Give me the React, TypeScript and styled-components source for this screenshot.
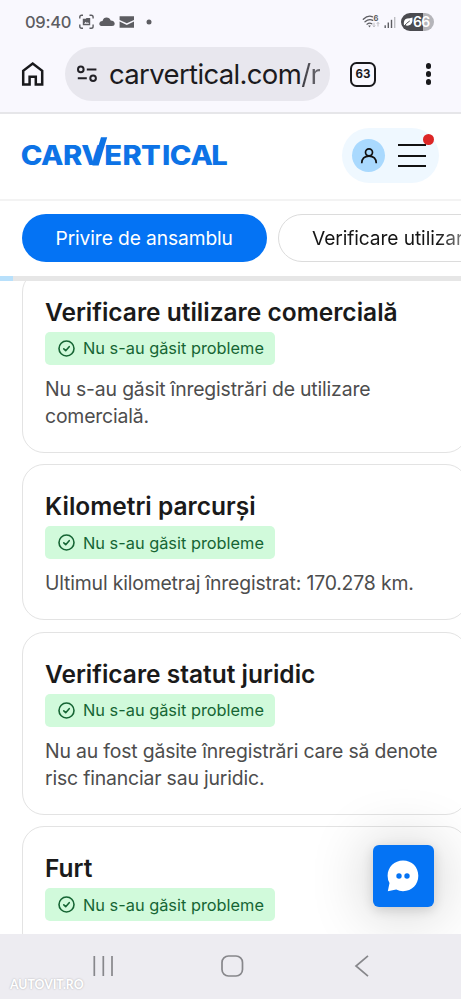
import React from "react";
import styled, { createGlobalStyle } from "styled-components";

const Global = createGlobalStyle`
  * { box-sizing: border-box; }
  html, body { margin: 0; padding: 0; overflow: hidden; }
  body { font-family: Inter, "Liberation Sans", sans-serif; background: #fff; }
  svg { display: block; flex: none; overflow: visible; }
`;

const Screen = styled.div`
  position: relative;
  width: 461px;
  height: 999px;
  overflow: hidden;
  display: flex;
  flex-direction: column;
  background: #fff;
`;

const BrowserChrome = styled.div`
  flex: none;
  height: 114px;
  background: #f9f8fe;
  border-bottom: 2px solid #e6e6e9;
`;

const StatusBar = styled.div`
  height: 43px;
  padding: 0 27px 0 25px;
  display: flex;
  align-items: center;
  justify-content: space-between;
  color: #5d5d62;
`;

const StatusGroup = styled.div`
  display: flex;
  align-items: center;
`;

const Clock = styled.span`
  width: 53.5px;
  font-size: 16.5px;
  line-height: 20px;
  letter-spacing: -0.3px;
  font-weight: 500;
`;

const Battery = styled.div`
  width: 33px;
  height: 18px;
  margin-left: 5px;
  padding-left: 2px;
  border-radius: 9px;
  background: linear-gradient(90deg, #4b4b50 66%, #b5b5ba 66%);
  color: #fff;
  display: flex;
  align-items: center;
  font-size: 14px;
  font-weight: 600;
  letter-spacing: -0.8px;
`;

const AddressRow = styled.div`
  height: 62px;
  padding: 0 30px 0 20px;
  display: flex;
  align-items: center;
`;

const AddressField = styled.div`
  width: 265px;
  height: 54px;
  margin: 0 20px 0 19px;
  padding-left: 11px;
  border-radius: 27px;
  background: #e8e7ee;
  display: flex;
  align-items: center;
`;

const Address = styled.span`
  margin-left: 11px;
  font-family: Inter, sans-serif;
  font-size: 27.5px;
  line-height: 34px;
  letter-spacing: -0.65px;
  white-space: nowrap;
  color: #1c1b20;
`;

const AddressPath = styled.span`
  background: linear-gradient(90deg, #3a393f, #706f76);
  background-clip: text;
  -webkit-background-clip: text;
  color: transparent;
`;

const TabCounter = styled.div`
  width: 26px;
  height: 25px;
  border: 2.6px solid #19191c;
  border-radius: 6.5px;
  display: flex;
  align-items: center;
  justify-content: center;
  font-size: 11.5px;
  font-weight: 700;
  color: #19191c;
`;

const MoreDots = styled.div`
  margin-left: auto;
  width: 5.5px;
  display: grid;
  gap: 2.7px;
`;

const Dot = styled.i`
  display: block;
  width: 5.5px;
  height: 5.5px;
  border-radius: 50%;
  background: #19191c;
`;

const SiteHeader = styled.header`
  flex: none;
  height: 87px;
  padding: 0 22px 2px;
  border-bottom: 2px solid #f3f3f3;
  display: flex;
  align-items: center;
  justify-content: space-between;
`;

const AccountPill = styled.div`
  position: relative;
  width: 97px;
  height: 55px;
  padding: 0 13px 0 10px;
  border-radius: 28px;
  background: #eff8ff;
  display: flex;
  align-items: center;
  justify-content: space-between;
`;

const Avatar = styled.div`
  width: 33px;
  height: 33px;
  border-radius: 50%;
  background: #a9d9fe;
  display: flex;
  align-items: center;
  justify-content: center;
`;

const Burger = styled.div`
  width: 28px;
  display: grid;
  gap: 8.5px;
`;

const BurgerLine = styled.i`
  height: 2px;
  background: #111;
`;

const AlertDot = styled.i`
  position: absolute;
  top: 6px;
  right: 5px;
  width: 11px;
  height: 11px;
  border-radius: 50%;
  background: #dc2626;
`;

const Tabs = styled.nav`
  flex: none;
  height: 75px;
  padding: 13px 0 0 22px;
  display: flex;
  gap: 11px;
`;

const Tab = styled.div<{ $active?: boolean }>`
  flex: none;
  width: ${(p) => (p.$active ? 245 : 300)}px;
  height: 48px;
  padding-left: ${(p) => (p.$active ? 33.5 : 33)}px;
  border-radius: 24px;
  border: ${(p) => (p.$active ? "0" : "1.5px solid #dcdcdc")};
  background: ${(p) => (p.$active ? "#0473f4" : "#fff")};
  display: flex;
  align-items: center;
  white-space: nowrap;
  font-size: 19.2px;
`;

const TabText = styled.span<{ $active?: boolean }>`
  letter-spacing: -0.1px;
  color: ${(p) => (p.$active ? "#fff" : "transparent")};
  background: ${(p) => (p.$active ? "none" : "linear-gradient(90deg, #151515 125px, #888 152px)")};
  background-clip: text;
  -webkit-background-clip: text;
`;

const Progress = styled.div`
  flex: none;
  height: 5px;
  background: #e6e6e6;
`;

const ProgressFill = styled.div`
  width: 12.5px;
  height: 5px;
  background: #b8e0fb;
`;

const CardList = styled.main`
  flex: 1;
  min-height: 0;
  overflow: hidden;
  padding-left: 22px;
  display: flex;
  flex-direction: column;
  gap: 11.5px;
`;

const Card = styled.article<{ $scrolled?: boolean }>`
  flex: none;
  width: 446px;
  margin-top: ${(p) => (p.$scrolled ? -11.5 : 0)}px;
  padding: 24px 22px 21.7px;
  border: 1.3px solid #e3e3e3;
  border-radius: 22px;
  display: flex;
  flex-direction: column;
  align-items: flex-start;
`;

const CardTitle = styled.h2`
  margin: 0;
  font-size: 24.5px;
  line-height: 34px;
  font-weight: 600;
  white-space: nowrap;
  color: #1a1a1a;
`;

const Badge = styled.div`
  width: 230px;
  height: 33px;
  margin: 3px 0 11.2px;
  padding-left: 13px;
  border-radius: 5px;
  background: #d1fadb;
  color: #166534;
  display: flex;
  align-items: center;
  gap: 8px;
  font-size: 16.35px;
  white-space: nowrap;
`;

const CardText = styled.p`
  margin: 0;
  font-size: 19.4px;
  line-height: 27.1px;
  letter-spacing: -0.17px;
  white-space: pre;
  color: #4d4d4d;
`;

const ChatButton = styled.div`
  position: absolute;
  left: 372.5px;
  top: 845px;
  width: 61.5px;
  height: 61.5px;
  border-radius: 6px;
  background: #0473f4;
  box-shadow: 0 3px 12px rgba(0, 0, 0, 0.14), 0 3px 62px rgba(0, 0, 0, 0.24);
  display: flex;
  align-items: center;
  justify-content: center;
`;

const SystemNav = styled.footer`
  position: relative;
  z-index: 1;
  flex: none;
  height: 65.5px;
  padding: 0 92px 1px 92px;
  background: #edecf1;
  display: flex;
  align-items: center;
`;

const NavButton = styled.div<{ $push?: number }>`
  margin-left: ${(p) => p.$push ?? 0}px;
`;

const Watermark = styled.span`
  position: absolute;
  left: 10px;
  bottom: 6px;
  font-family: Lato, sans-serif;
  font-size: 12.3px;
  line-height: 16px;
  font-weight: 700;
  color: #fff;
  text-shadow: 0 0 2px rgba(0, 0, 0, 0.28);
`;

const NotificationIcons = () => (
  <svg width="74" height="18" viewBox="0 0 74 18" fill="#5d5d62">
    <path
      d="M.8 5.5V4Q.8 2.2 2.6 2.2H4M10.5 2.2h1.8q1.8 0 1.8 1.8v1.5M14.1 11.5v2q0 1.8-1.8 1.8h-1.8M4 15.3H2.6Q.8 15.3.8 13.5v-2"
      fill="none"
      stroke="#5d5d62"
      strokeWidth="1.4"
    />
    <path d="M3.8 5.8h3l.7-.8h3.7v7.3H3.8z" />
    <path d="M5 10.7l1.7-2 1.2 1.3 1-.8 1.4 1.5z" fill="#f9f8fe" />
    <path d="M23.5 13q-3.2 0-3.2-2.3Q20.5 8.3 23.5 8 24.5 4.6 27.5 4.6q3.2 0 4.2 3 3.5.2 4 2.9 0 2.5-2.7 2.5z" />
    <path d="M40.6 3.2H55V7l-7.2 3.3L40.6 7zM40.6 8.5l7.2 3.4L55 8.5v6.2H40.6z" />
    <circle cx="70" cy="9" r="2.5" />
  </svg>
);

const SignalIcons = () => (
  <svg width="33" height="18" viewBox="0 0 33 18">
    <g fill="none" stroke="#5d5d62" strokeWidth="1.3" strokeLinecap="round">
      <path d="M.3 6.3Q5 1.8 9.5 3.8M2 8.8Q6 5.3 9.8 7.3M4 11.2Q6.5 9.4 8.8 10.8" />
    </g>
    <path d="M5.2 12.5h2.6L6.5 14.5z" fill="#5d5d62" />
    <text x="10.6" y="7.6" fontSize="7.5" fontWeight="700" fontFamily="Inter" fill="#5d5d62">6</text>
    <path d="M11 9.8v4m-1.2-1.3 1.2 1.4 1.2-1.4M15 13.5v-4m-1.2 1.3L15 9.4l1.2 1.4" fill="none" stroke="#b8b8bd" strokeWidth=".9" />
    <g fill="#5d5d62">
      <rect x="21.5" y="12.3" width="1.4" height="2.7" />
      <rect x="24.6" y="9.5" width="1.4" height="5.5" />
      <rect x="27.8" y="6.8" width="1.4" height="8.2" />
    </g>
    <rect x="31" y="4" width="1.4" height="11" fill="#bdbdc2" />
  </svg>
);

const Leaf = () => (
  <svg width="10" height="10" viewBox="0 0 10 10">
    <path d="M1 8.5Q0 2.5 4 1.5 7 1.5 9.5.5 10 8 5.5 8.5 3.5 9 2.5 8z" fill="#fff" />
    <path d="M1 9.3Q3.5 6 6.8 3.9" stroke="#4b4b50" fill="none" />
  </svg>
);

const HomeIcon = () => (
  <svg width="26" height="26" viewBox="0 0 26 26" fill="none" stroke="#19191c" strokeWidth="2.5">
    <path d="M3.2 23.6V9.8L12.7 2.6l9.5 7.2v13.8h-6.4v-7.8H9.6v7.8z" />
  </svg>
);

const TuneIcon = () => (
  <svg width="22" height="18" viewBox="0 0 22 18" fill="none" stroke="#222126" strokeWidth="2">
    <circle cx="4.8" cy="4.4" r="2.8" />
    <path d="M10.8 4.4h9.6M1.8 13.2h9" />
    <circle cx="17.1" cy="13.2" r="2.8" />
  </svg>
);

const Logo = () => (
  <svg width="206" height="32" viewBox="22 139.2 206 32" fill="#0d73e6">
    <text
      transform="translate(22 0) scale(1.1 1)"
      x="-1.2 17.2 37.2 53.8 74.7 91.4 108.2 127.2 134.3 153.2 172"
      y="164.7"
      fontFamily="Inter, sans-serif"
      fontSize="26.5"
      fontWeight="800"
    >
      CARVERTICAL
    </text>
    <path d="M101 136.5h6.2L98.6 164.7h-6.2z" />
  </svg>
);

const PersonIcon = () => (
  <svg width="18" height="18" viewBox="0 0 18 18" fill="none" stroke="#111" strokeWidth="1.7">
    <circle cx="9" cy="5.3" r="3.5" />
    <path d="M1.7 16.3Q2 9.2 9 9.2t7.3 7.1" />
  </svg>
);

const CheckIcon = () => (
  <svg width="17" height="17" viewBox="0 0 17 17" fill="none" stroke="#166534" strokeWidth="1.6" strokeLinecap="round" strokeLinejoin="round">
    <circle cx="8.5" cy="8.5" r="7.5" />
    <path d="M5.8 8.9l1.9 1.8 3.5-4" />
  </svg>
);

const ChatIcon = () => (
  <svg width="32" height="32" viewBox="0 0 32 32">
    <path d="M16 .5C25 .5 31.3 7 31.3 15.8S25 31.2 16 31.2q-3.5 0-6.8-1.8L.8 31.2 2.5 23Q.6 20 .6 15.8C.6 7 7.5.5 16 .5z" fill="#fff" />
    <circle cx="12" cy="16" r="2.7" fill="#0473f4" />
    <circle cx="20" cy="16" r="2.7" fill="#0473f4" />
  </svg>
);

const RecentsIcon = () => (
  <svg width="22" height="22" viewBox="0 0 22 22" stroke="#87878b" strokeWidth="1.7">
    <path d="M2.3 1v20M11.3 1v20M20 1v20" />
  </svg>
);

const HomeNavIcon = () => (
  <svg width="23" height="22" viewBox="0 0 23 22" fill="none" stroke="#87878b" strokeWidth="1.7">
    <rect x="1" y="1" width="20.5" height="20" rx="6.5" />
  </svg>
);

const BackIcon = () => (
  <svg width="14" height="22" viewBox="0 0 14 22" fill="none" stroke="#87878b" strokeWidth="1.7">
    <path d="M13 .8L1 11l12 10.2" />
  </svg>
);

const checks = [
  { title: "Verificare utilizare comercială", text: "Nu s-au găsit înregistrări de utilizare\ncomercială." },
  { title: "Kilometri parcurși", text: "Ultimul kilometraj înregistrat: 170.278 km." },
  { title: "Verificare statut juridic", text: "Nu au fost găsite înregistrări care să denote\nrisc financiar sau juridic." },
  { title: "Furt", text: "" },
];

export default function App() {
  return (
    <Screen>
      <Global />
      <BrowserChrome>
        <StatusBar>
          <StatusGroup>
            <Clock>09:40</Clock>
            <NotificationIcons />
          </StatusGroup>
          <StatusGroup>
            <SignalIcons />
            <Battery>
              <Leaf />
              66
            </Battery>
          </StatusGroup>
        </StatusBar>
        <AddressRow>
          <HomeIcon />
          <AddressField>
            <TuneIcon />
            <Address>
              carvertical.com<AddressPath>/r</AddressPath>
            </Address>
          </AddressField>
          <TabCounter>63</TabCounter>
          <MoreDots>
            <Dot />
            <Dot />
            <Dot />
          </MoreDots>
        </AddressRow>
      </BrowserChrome>
      <SiteHeader>
        <Logo />
        <AccountPill>
          <Avatar>
            <PersonIcon />
          </Avatar>
          <Burger>
            <BurgerLine />
            <BurgerLine />
            <BurgerLine />
          </Burger>
          <AlertDot />
        </AccountPill>
      </SiteHeader>
      <Tabs>
        <Tab $active>
          <TabText $active>Privire de ansamblu</TabText>
        </Tab>
        <Tab>
          <TabText>Verificare utilizare</TabText>
        </Tab>
      </Tabs>
      <Progress>
        <ProgressFill />
      </Progress>
      <CardList>
        {checks.map((check, i) => (
          <Card key={check.title} $scrolled={i === 0}>
            <CardTitle>{check.title}</CardTitle>
            <Badge>
              <CheckIcon />
              Nu s-au găsit probleme
            </Badge>
            <CardText>{check.text}</CardText>
          </Card>
        ))}
      </CardList>
      <SystemNav>
        <NavButton>
          <RecentsIcon />
        </NavButton>
        <NavButton $push={107}>
          <HomeNavIcon />
        </NavButton>
        <NavButton $push={111}>
          <BackIcon />
        </NavButton>
        <Watermark>AUTOVIT.RO</Watermark>
      </SystemNav>
      <ChatButton>
        <ChatIcon />
      </ChatButton>
    </Screen>
  );
}
